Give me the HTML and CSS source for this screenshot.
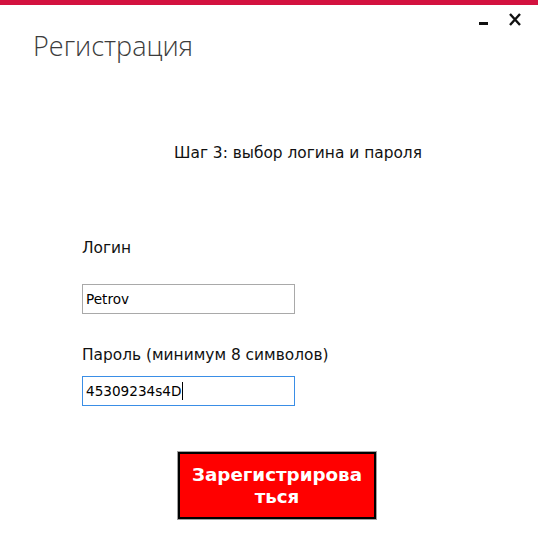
FILE: index.html
```html
<!DOCTYPE html>
<html lang="ru">
<head>
<meta charset="utf-8">
<title>Регистрация</title>
<link rel="stylesheet" href="styles.css">
</head>
<body>
<div class="window">
  <div class="accent"></div>
  <div class="header">
    <h1 class="title">Регистрация</h1>
    <div class="controls">
      <svg class="ctl" width="40" height="30" viewBox="0 0 40 30" aria-label="controls">
        <rect x="1" y="17" width="9" height="3" fill="#111"/>
        <path d="M32 9 L42 20 M42 9 L32 20" stroke="#111" stroke-width="2.4" fill="none"/>
      </svg>
    </div>
  </div>
  <p class="step">Шаг 3: выбор логина и пароля</p>
  <div class="form">
    <label class="label login-label">Логин</label>
    <div class="input">Petrov</div>
    <label class="label pass-label">Пароль (минимум 8 символов)</label>
    <div class="input focused">45309234s4D<span class="caret"></span></div>
  </div>
  <div class="actions">
    <button class="register">Зарегистрирова<br>ться</button>
  </div>
</div>
</body>
</html>
```

FILE: styles.css
```css
* { box-sizing: border-box; }
html, body { margin: 0; padding: 0; background: #fff; }
body { width: 538px; height: 550px; overflow: hidden; font-family: "DejaVu Sans", Tahoma, sans-serif; color: #111; }

.window { display: flex; flex-direction: column; height: 550px; }
.accent { height: 5px; background: #d3123f; flex: none; }

.header { display: flex; justify-content: space-between; align-items: flex-start; padding: 0 0 0 33px; height: 70px; }
.title { margin: 23px 0 0; font-family: "Open Sans", "Noto Sans", sans-serif; font-weight: 300; font-size: 27px; line-height: 36px; color: #3c3c3c; }
.controls { display: flex; }
.ctl { display: block; overflow: visible; margin-right: 20px; }

.step { margin: 69px 0 0; padding-left: 174px; font-size: 15.4px; line-height: 18px; color: #111; }

.form { display: flex; flex-direction: column; padding-left: 82px; margin-top: 77px; }
.label { font-size: 15.4px; line-height: 18px; }
.login-label { margin-bottom: 27px; }
.pass-label { margin-top: 32px; margin-bottom: 12px; }
.input { width: 213px; height: 30px; border: 1px solid #a9a9a9; font-size: 13.6px; line-height: 28px; padding-left: 3px; color: #000; display: flex; align-items: center; }
.input.focused { border-color: #3a8ee6; }
.caret { display: inline-block; width: 1px; height: 18px; background: #000; margin-left: 1px; }

.actions { display: flex; padding-left: 178px; margin-top: 46px; }
.register { width: 198px; height: 67px; background: #ff0000; color: #fff; border: 2px solid #000; outline: 1px solid #a0a0a0; font-family: "DejaVu Sans", Tahoma, sans-serif; font-weight: bold; font-size: 18.3px; line-height: 22px; padding: 0; padding-top: 1px; }
```
